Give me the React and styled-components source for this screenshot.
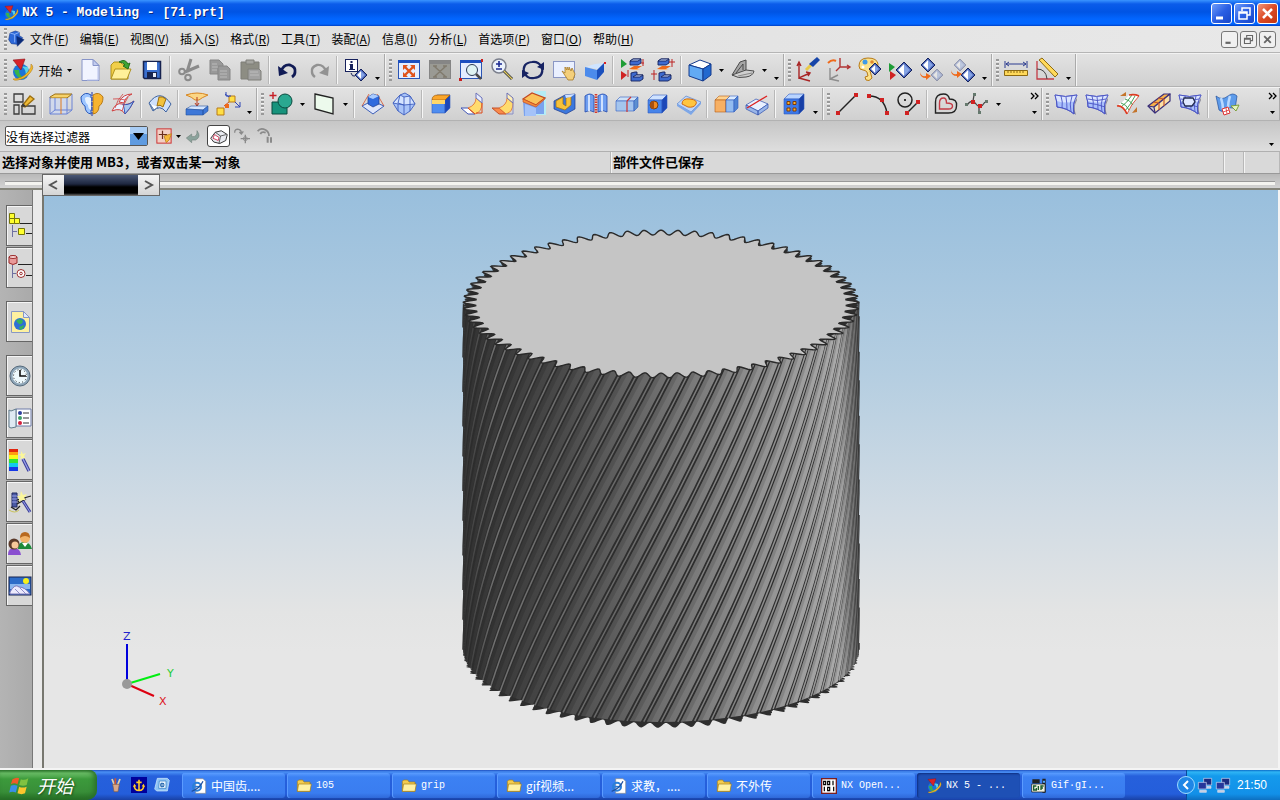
import React from "react";
import styled, { createGlobalStyle, css } from "styled-components";

const GlobalStyle = createGlobalStyle`
  * {
    box-sizing: border-box;
  }

  body {
    margin: 0;
    font-family: "Noto Sans CJK SC", "Liberation Sans", sans-serif;
    font-size: 12px;
    color: #000;
    background: #d6d6d6;
  }

  button {
    font: inherit;
    color: inherit;
    padding: 0;
    border: 0;
    background: none;
  }
`;

/* ---------- icons ---------- */

const Svg = styled.svg`
  display: block;
  flex: none;
  overflow: visible;
`;

const Box = ({ x = 3, y = 4, w = 13, h = 12, d = 5, top = "#fff", front = "#5a94f0", side = "#1d4bbd", line = "#2f5bc0" }) => (
  <g stroke={line} strokeWidth=".6" strokeLinejoin="round">
    <path d={`M${x} ${y + d}l${d} ${-d}h${w}l${-d} ${d}z`} fill={top} />
    <path d={`M${x} ${y + d}h${w}v${h}h${-w}z`} fill={front} />
    <path d={`M${x + w} ${y + d}l${d} ${-d}v${h}l${-d} ${d}z`} fill={side} />
  </g>
);

const Diamond = ({ x = 12, y = 12, s = 7, o = 1 }) => (
  <g opacity={o}>
    <path d={`M${x} ${y - s}l${s} ${s}l${-s} ${s}l${-s} ${-s}z`} fill="#4a65b8" stroke="#14225e" />
    <path d={`M${x} ${y - s + 2}v${2 * s - 4}l${-s + 2} ${-s + 2}z`} fill="#fff" />
    <path d={`M${x} ${y - s + 2}v${2 * s - 4}l${s - 2} ${-s + 2}z`} fill="#86a4e4" />
  </g>
);

const Sheet = ({ grid }) => (
  <g stroke="#4b55c4" strokeWidth=".9">
    <path d="M22 5l1 3q-4 7-1 15l-3-2z" fill="#8a8a99" stroke="none" />
    <path d="M1 3q10 3 22 0q-5 9-3 19q-7-6-17-7q0-6-2-12z" fill="#a9bffc" />
    <path d="M1 3q10 3 22 0l-2 6q-9 3-18 0z" fill="#dbe5ff" stroke="none" />
    <path d="M1 3q10 3 22 0q-5 9-3 19q-7-6-17-7q0-6-2-12zM7 4q2 6 1 12M12 5q1 6 1 13M18 4q-3 8-1 16" fill="none" />
    {grid && <path d="M3 7q9 3 18 0M3 11q9 1 17 4" fill="none" />}
  </g>
);

const NxMark = () => (
  <g>
    <circle cx="11" cy="14" r="8" fill="#1b74d8" />
    <path d="M4 12q2 9 11 9q-6-3-6-9z" fill="#38b34a" />
    <path d="M9 8q7 1 7 9q3-4 2-8z" fill="#59d3e8" />
    <path d="M21 6q4 3-1 9t-12 7q-4 1-5-1q9 0 15-7q4-5 3-8z" fill="#f2b92c" stroke="#a8720d" strokeWidth=".5" />
    <path d="M3 2l12-1l-4 11z" fill="#d8232a" stroke="#8c1015" strokeWidth=".6" />
  </g>
);

const WinBox = ({ children, fill = "#e4edff" }) => (
  <g>
    <rect x="1.5" y="2.5" width="21" height="18" fill={fill} stroke="#2a55b5" />
    <path d="M1 2h22v3H1z" fill="#1c4fc0" />
    {children}
  </g>
);

const icons = {
  nx: <NxMark />,
  part: (
    <g stroke="#0c2d80" strokeWidth=".8">
      <path d="M3 3l8-3l6 2v5l5 3l-8 10l-9-1l-4-6z" fill="#2d68d8" />
      <path d="M3 3l7 2l7-3M10 5v12" fill="none" stroke="#9fc2ff" strokeWidth="1.200" />
      <path d="M13 8l11 5l-10 10z" fill="#0a2a78" />
    </g>
  ),
  newFile: (
    <g stroke="#8794c8">
      <path d="M4 1.500h11l6 6v15H4z" fill="#f1f4ff" />
      <path d="M15 1.500v6h6z" fill="#c3cdf0" />
      <path d="M20 9v13H9" fill="none" stroke="#b9c3ea" />
    </g>
  ),
  open: (
    <g stroke="#a98a12" strokeWidth=".9" strokeLinejoin="round">
      <path d="M2 21V7l3-3h6l2 2h6v15z" fill="#f1cf4a" />
      <path d="M2 21l4-10h16l-4 10z" fill="#fff09a" />
      <path d="M10 4q6-4 9 2l2-1l-2 6l-5-3l2-1q-2-3-6-3z" fill="#3fa433" stroke="#1e6a18" />
    </g>
  ),
  save: (
    <g>
      <path d="M3.500 3.500h17v17h-16l-1-1z" fill="#3a6fcf" stroke="#16224f" strokeWidth="1.500" />
      <path d="M7 4h10v8H7z" fill="#fff" />
      <path d="M7 14h10v6H7z" fill="#18244e" />
      <path d="M13 15h3v4h-3z" fill="#e8edf8" />
    </g>
  ),
  cut: (
    <g fill="none" stroke="#8b8b8b" strokeWidth="2">
      <path d="M14 1l-4 13M22 8L8 14" strokeWidth="3" />
      <circle cx="5" cy="13.500" r="2.800" />
      <circle cx="11" cy="19.500" r="2.800" />
    </g>
  ),
  copy: (
    <g fill="#999" stroke="#858585">
      <path d="M2 2h9l4 4v10H2z" />
      <path d="M10 8h9l3 3v11H10z" />
      <path d="M4 6h5M4 9h6M4 12h5M12 13h7M12 16h7M12 19h7" stroke="#bbb" />
    </g>
  ),
  paste: (
    <g fill="#8d8d83" stroke="#7f7f78">
      <path d="M2 4h18v17H2z" />
      <path d="M7 2h8v4H7z" fill="#a5a5a0" />
      <path d="M9 11h11l2 2v9H9z" fill="#a2a2a2" />
      <path d="M11 14h8M11 17h9" stroke="#bdbdbd" />
    </g>
  ),
  undo: (
    <g>
      <path d="M5 13q3-7 9-6q6 2 5 7q0 3-3 5" fill="none" stroke="#111b55" strokeWidth="2.800" />
      <path d="M2 8l1 10l9-3z" fill="#111b55" />
    </g>
  ),
  redo: (
    <g>
      <path d="M19 13q-3-7-9-6q-6 2-5 7q0 3 3 5" fill="none" stroke="#929292" strokeWidth="2.400" />
      <path d="M22 8l-1 10l-9-3z" fill="#929292" />
    </g>
  ),
  info: (
    <g>
      <rect x="1.500" y="1.500" width="12" height="12" fill="#fff" stroke="#16215c" />
      <path d="M6 6h3v5h2v1H5v-1h1V7H5zM6.500 3h2v2h-2z" fill="#16215c" />
      <path d="M7 15q1 4 4 3" fill="none" stroke="#16215c" />
      <Diamond x={17} y={17} s={6} />
    </g>
  ),
  fit: (
    <WinBox>
      <path d="M8 9l8 8M16 9l-8 8" stroke="#e0531b" strokeWidth="2.400" />
      <path d="M6 7h5l-5 5zM18 7h-5l5 5zM6 19h5l-5-5zM18 19h-5l5-5z" fill="#e0531b" />
    </WinBox>
  ),
  fitSel: (
    <g>
      <rect x="1.500" y="2.500" width="21" height="18" fill="#9a9a94" stroke="#858585" />
      <path d="M2 3h20v3H2z" fill="#868686" />
      <path d="M6 8l12 11M18 8L6 19M5 8h4M15 8h4M5 19h4M15 19h4" stroke="#817b6e" strokeWidth="1.500" />
    </g>
  ),
  zoom: (
    <WinBox>
      <circle cx="13" cy="12" r="5.500" fill="#dff3f3" stroke="#2c3a55" />
      <path d="M17 16l5 5" stroke="#4a4a4a" strokeWidth="2.500" />
      <path d="M0 20h3v3H0zM22 1h2v3h-2z" fill="#c92020" />
    </WinBox>
  ),
  zoomInOut: (
    <g>
      <circle cx="9" cy="8" r="7" fill="#eaf1fb" stroke="#7b7f8c" strokeWidth="1.500" />
      <path d="M9 3v6M6 6h6M6 11h6" stroke="#1c2a93" strokeWidth="1.600" />
      <path d="M14 13l8 8" stroke="#3d3d3d" strokeWidth="3" />
      <path d="M14 13l8 8" stroke="#e7cf5d" strokeWidth="1.200" />
    </g>
  ),
  rotate: (
    <g fill="none" stroke="#182463" strokeWidth="2.200">
      <path d="M3 15Q1 5 11 4q6-1 9 4M21 9q2 10-8 11q-6 1-9-4" />
      <path d="M23 4v8l-7-3zM1 20v-8l7 3z" fill="#182463" stroke="none" />
    </g>
  ),
  pan: (
    <g>
      <rect x="1.500" y="3.500" width="21" height="16" fill="#eaf0ff" stroke="#8b97c4" />
      <path d="M10 13l3 2V9l2 3V9l2 3V9l2 4l1-3l3 6l-2 6h-5z" fill="#f4cf7a" stroke="#a77a25" strokeWidth=".8" />
    </g>
  ),
  perspective: (
    <g>
      <path d="M2 9l10-3l9-1l-6 6z" fill="#cfe4ff" />
      <path d="M2 9l12 3v10L2 18z" fill="#4c8bec" />
      <path d="M14 12l7-7v9l-7 8z" fill="#1b50bd" />
      <path d="M21 4h2v2h-2z" fill="#d22" />
    </g>
  ),
  clipA: (
    <g>
      <path d="M1 1l6 5l-6 4z" fill="#1f9d37" />
      <path d="M1 13l6 4l-6 5z" fill="#d02323" />
      <g stroke="#14225e" strokeWidth=".9" fill="#3e6bcf">
        <path d="M10 3l3-2h8v4l-3 2h-8zM11 15l4-1h2v3h6v4l-3 2h-9z" />
        <path d="M10 3h8l3-2h-8zM13 19h7l3-2h-7z" fill="#c3d8ff" />
      </g>
      <path d="M9 11l5-3h8l-5 3z" fill="#ef6a1b" />
      <path d="M9 11h8l4 1h-8z" fill="#ffb06a" />
      <path d="M23 1v7M8 12v7M21 5h3" stroke="#b22" />
    </g>
  ),
  clipB: (
    <g>
      <g stroke="#14225e" strokeWidth=".9" fill="#3e6bcf">
        <path d="M7 3l3-2h8v4l-3 2H7zM8 15l4-1h2v3h6v4l-3 2H8z" />
        <path d="M7 3h8l3-2h-8zM10 19h7l3-2h-7z" fill="#c3d8ff" />
      </g>
      <path d="M6 11l5-3h9l-5 3z" fill="#ef6a1b" />
      <path d="M6 11h8l4 1h-8z" fill="#ffb06a" />
      <path d="M21 1v8M18 4h6M3 12v10M0 16h6" stroke="#b22" fill="none" />
    </g>
  ),
  shaded: (
    <g stroke="#143a8d" strokeLinejoin="round">
      <path d="M1 7l11-5l11 4l-8 5z" fill="#fff" />
      <path d="M1 7l14 4v12L1 18z" fill="#62aaf4" />
      <path d="M15 11l8-5v11l-8 6z" fill="#2269cf" />
    </g>
  ),
  section: (
    <g stroke="#4b4b4b" strokeLinejoin="round">
      <path d="M1 17L9 4l6-2v10l-8 6z" fill="#a6a6a6" />
      <path d="M1 17l14-5l8 1q-1 5-8 6q-8 2-14-2z" fill="#cfcfcf" />
      <path d="M5 15l7-9v6" fill="none" />
      <path d="M7 18l14-3" fill="none" stroke="#888" />
    </g>
  ),
  wcs: (
    <g fill="none" stroke="#a82424" strokeWidth="1.400">
      <path d="M3 6v14l11-5M3 20l11 3M1 8l2-4l2 4M10 14l4 1l-2 3" />
      <path d="M10 12L18 4" stroke="#e8c948" strokeWidth="3" />
      <path d="M13 6l8-7l3 3l-7 7z" fill="#1745a8" stroke="none" />
    </g>
  ),
  wcsMove: (
    <g fill="none" strokeWidth="1.400">
      <path d="M3 10v11l8-4M3 21l9 2" stroke="#8d8d8d" />
      <path d="M13 0v9h9M13 9l-4 4M20 7l3 2l-3 2" stroke="#b13434" />
      <path d="M1 5q4-4 8-2" stroke="#ef6a1b" strokeWidth="2" />
    </g>
  ),
  palette: (
    <g>
      <path d="M1 8q0-8 9-8t10 6q0 4-5 4q-3 0-3 3l2 7q-3 4-6 2l-1-3l3-1l-1-4q-2-2-4-2q-4 0-4-4z" fill="#fbe28b" stroke="#b87a16" />
      <circle cx="7" cy="4" r="2.500" fill="#3f9be8" />
      <circle cx="14" cy="4" r="1.800" fill="#e1882c" />
      <circle cx="5" cy="9" r="1.500" fill="#fff" />
      <Diamond x={17} y={11} s={6} />
    </g>
  ),
  showHide: (
    <g>
      <path d="M0 5l6 4l-6 5z" fill="#1f9d37" />
      <path d="M1 13l6 4l-6 5z" fill="#d02323" />
      <Diamond x={15} y={12} s={8} />
    </g>
  ),
  hide: (
    <g>
      <Diamond x={8} y={7} s={7} />
      <Diamond x={17} y={17} s={6} o={0.35} />
      <path d="M0 14q1 5 6 4v-3l5 3l-5 4v-2q-6 0-6-6z" fill="#ef6a1b" />
    </g>
  ),
  show: (
    <g>
      <Diamond x={9} y={7} s={6} o={0.35} />
      <Diamond x={17} y={17} s={7} />
      <path d="M0 12q1 5 6 4v-3l5 3l-5 4v-2q-6 0-6-6z" fill="#ef6a1b" />
    </g>
  ),
  distance: (
    <g>
      <path d="M1 3v7M23 3v7M2 6h20M5 4L2 6l3 2M19 4l3 2l-3 2" stroke="#2b3b8f" fill="none" />
      <path d="M.500 12.500h23v5H.500z" fill="#ffd95a" stroke="#8d6a12" />
      <path d="M4 13v2M7 13v2M10 13v2M13 13v2M16 13v2M19 13v2" stroke="#8d6a12" />
    </g>
  ),
  angle: (
    <g fill="none">
      <path d="M2 3v18h17" stroke="#c43b46" strokeWidth="1.300" />
      <path d="M2 11q9 0 10 10" stroke="#444" />
      <path d="M4 2l3-2l16 16l-3 3z" fill="#ffd95a" stroke="#8d6a12" />
    </g>
  ),
  sketch: (
    <g fill="none" stroke="#3b3b3b" strokeWidth="1.300">
      <path d="M2 2h9v8H2zM2 13h5v9H2zM10 14h13v8H10z" />
      <path d="M10 14l8-10l4 3l-9 8z" fill="#f0bb35" stroke="#9c6f10" />
      <path d="M10 14l1-2l2 2z" fill="#222" />
    </g>
  ),
  extrude: (
    <g fill="none">
      <path d="M1 5l5-3h17l-5 4H1z" fill="#f7d26a" stroke="#9c6f10" />
      <path d="M2 6h16v16H2z" fill="#cdd8f4" opacity=".7" />
      <path d="M1 5v17h17V6M6 6v12M23 2v16M1 22l5-4M18 22l5-4M6 18h17" stroke="#6a83d6" />
      <path d="M12 6v16" stroke="#e07a1b" />
    </g>
  ),
  revolve: (
    <g>
      <path d="M11 3Q5-1 1 5q0 7 4 9q0 7 6 8z" fill="#9cc5ff" stroke="#2756b8" />
      <path d="M13 3q6-4 10 2q0 7-4 9q0 7-6 8z" fill="#f6b431" stroke="#b87a16" />
      <path d="M11 6Q7 4 5 6q0 5 3 7q0 4 3 5z" fill="#e6f2ff" />
      <path d="M12 0v24" stroke="#1a35a8" strokeDasharray="4 1" />
    </g>
  ),
  swept: (
    <g fill="none">
      <path d="M8 10Q12 2 21 2q-7 3-8 9zM1 19q4-9 10-7q5 2 12-3q-4 8-9 13q-4-7-13-3z" fill="#eaf2ff" stroke="#d04040" />
      <path d="M12 12q5 2 11-3q-4 8-9 13q-1-7-2-10z" fill="#a9c8ee" stroke="#2f55b9" />
      <path d="M12 2q-6 6-8 14M17 5q-4 6-6 14M2 7q6-1 12 1" stroke="#d04040" strokeWidth=".8" />
    </g>
  ),
  offset: (
    <g>
      <path d="M1 11Q12-4 23 12l-5 8q-6-8-13-1z" fill="#cfe0fa" stroke="#3d629f" />
      <path d="M9 14q3-2 6 1l3-8q-4-3-7-2z" fill="#f2c23d" stroke="#9c6f10" />
      <path d="M2 12l4 6l4-3" fill="#fff" stroke="#56749f" />
    </g>
  ),
  emboss: (
    <g>
      <path d="M1 3q11-4 22 0q-7 3-9 5h-4Q7 5 1 3z" fill="#fbd685" stroke="#d88620" />
      <path d="M12 5v9M10 11l2 3l2-3" stroke="#b53a22" fill="none" />
      <path d="M1 17l5-3h17l-5 4z" fill="#d4e6ff" stroke="#23509e" strokeWidth=".6" />
      <path d="M1 17l17 1v5H1zM18 18l5-4v5l-5 4z" fill="#3e78d8" stroke="#23509e" strokeWidth=".6" />
    </g>
  ),
  pattern: (
    <g fill="#ffe23f" stroke="#b87a16">
      <path d="M1 16h7v7H1zM13 4h6v6h-6z" fill="#ffdf45" />
      <path d="M8 14l5-4" stroke="#d0501b" fill="none" />
      <path d="M9 2l4 3M19 10l5 5M10 0v4h5M24 10v5h-5" stroke="#2c45b5" fill="none" />
      <path d="M9 12h4v4H9z" fill="#ef6a1b" stroke="none" />
    </g>
  ),
  unite: (
    <g>
      <path d="M4 0v7M0.500 3.500h7" stroke="#c71f26" strokeWidth="1.400" />
      <path d="M3 10h15v12H3z" fill="#17937c" stroke="#0b4a3e" />
      <circle cx="16" cy="9" r="7" fill="#2aa890" stroke="#0b4a3e" />
    </g>
  ),
  datum: <path d="M3 2l18 4v16L3 17z" fill="#ecfaec" stroke="#222" strokeWidth="1.300" />,
  boss: (
    <g>
      <path d="M1 14l10-5l12 5l-11 8z" fill="#dfe6fa" stroke="#3d5fb8" />
      <path d="M1 14L8 2M23 14L16 2" stroke="#d5502a" strokeWidth=".8" />
      <path d="M7 5l5-3l6 2v8l-6 3l-5-3z" fill="#2f6ade" stroke="#1c3a8c" strokeWidth=".7" />
      <path d="M7 5l5 2l6-3l-6-2z" fill="#a9cbff" />
    </g>
  ),
  gem: (
    <g stroke="#3e5fbe" strokeWidth=".9" strokeLinejoin="round">
      <path d="M8 3l5-2l5 3l5 8l-5 7l-6 4l-6-4l-5-8z" fill="#a9c4f8" />
      <path d="M8 3l4 2l6-1l5 8l-11 1L1 11z" fill="#d5e4ff" />
      <path d="M12 5v18M8 3L6 11l6 2M18 4l0 8M6 12v7M18 12v7" fill="none" />
    </g>
  ),
  block: (
    <g>
      <Box x={3} y={3} w={13} h={13} d={5} top="#ffd14a" front="#4f8df0" side="#1c48b8" />
      <path d="M3 8q0-5 6-5h12l-5 5z" fill="#fba62a" stroke="#a05c0c" strokeWidth=".7" />
      <path d="M3 8h13v4H3z" fill="#ffd76a" />
    </g>
  ),
  flangeA: (
    <g strokeLinejoin="round">
      <path d="M1 16h7l7 6H8z" fill="#fff" stroke="#4055b5" />
      <path d="M8 16q8-3 8-10l6 5q0 9-7 11z" fill="#ffdc6e" stroke="#e06a2b" strokeWidth=".8" />
      <path d="M16 6V1l6 5v5z" fill="#e8eeff" stroke="#6a70b8" />
      <path d="M8 16l7 6M22 11v10h-6" stroke="#dc4b1b" fill="none" />
    </g>
  ),
  flangeB: (
    <g strokeLinejoin="round">
      <path d="M1 16h7l7 6H8z" fill="#f98a4a" stroke="#c4502a" />
      <path d="M8 16q8-3 8-10l6 5q0 9-7 11z" fill="#ffdc6e" stroke="#e06a2b" strokeWidth=".8" />
      <path d="M16 6V1l6 5v5z" fill="#fff0b8" stroke="#6a70b8" />
      <path d="M22 11v11h-7" stroke="#8a8fc8" fill="none" />
    </g>
  ),
  chamfer: (
    <g>
      <path d="M12-1h12v24H12z" fill="#b5ecf5" />
      <path d="M1 9l13 5l8-7v15h-8v2H2z" fill="#7aa2ee" />
      <path d="M3 12l11 4v8H3z" fill="#a4c2f8" />
      <path d="M1 7l9-6l13 5l-9 7z" fill="#fbc35a" stroke="#c34720" strokeWidth="1.200" />
      <path d="M1 7v3l13 5l9-8V6l-9 7z" fill="#f58d3a" stroke="#c34720" strokeWidth=".6" />
    </g>
  ),
  shell: (
    <g>
      <path d="M1 9l11-6l10-1v15l-9 5L1 17z" fill="#3c78dd" stroke="#1c3a8c" strokeWidth=".7" />
      <path d="M3 9l7-4v7l3 2V6l5-2v9l-6 5l-9-3z" fill="#f6c139" stroke="#9c6f10" strokeWidth=".7" />
      <path d="M12 3l10-1l-4 3l-5 1z" fill="#cfe0ff" />
    </g>
  ),
  thread: (
    <g>
      <path d="M1 4q5-4 9 0v16q-4-3-9 0zM14 4q5-4 9 0v16q-4-3-9 0z" fill="#6f9ef0" stroke="#2047ad" strokeWidth=".8" />
      <path d="M5 3v16M18 3v16" stroke="#cfe1ff" strokeWidth="2" />
      <path d="M12 2v20" stroke="#d5382d" strokeWidth="2.600" strokeDasharray="1.500 1" />
    </g>
  ),
  split: (
    <g>
      <Box x={1} y={5} w={18} h={10} d={4} top="#cfe2f7" front="#a4c5ee" side="#5d8fd0" />
      <path d="M12 9v11M12 9l4-4" stroke="#c33" strokeWidth="1.200" />
    </g>
  ),
  hole: (
    <g>
      <Box x={2} y={3} w={14} h={13} d={5} top="#cfe2ff" front="#4684ea" side="#1c48b8" />
      <circle cx="8" cy="13" r="4" fill="#f08a20" stroke="#5a2c08" strokeWidth=".8" />
      <path d="M8 9a4 4 0 0 0 0 8z" fill="#a8500e" />
    </g>
  ),
  pad: (
    <g>
      <path d="M0 12l9-8l15 6l-10 10z" fill="#bcd5fb" stroke="#5b84c9" strokeWidth=".7" />
      <path d="M14 20l10-10v2L14 23L0 14v-2z" fill="#7da7e8" />
      <path d="M5 12q0-6 8-5q8 1 6 5q-2 4-8 3z" fill="#ffc53f" stroke="#d16b13" />
    </g>
  ),
  trim: (
    <g>
      <Box x={1} y={4} w={11} h={12} d={4} top="#ffd28f" front="#f7b064" side="#e58a34" line="#b35c14" />
      <Box x={12} y={4} w={8} h={12} d={4} top="#dcecff" front="#93bcf0" side="#4f83d2" />
    </g>
  ),
  splitSheet: (
    <g>
      <path d="M1 13l10-6l12 5l-10 7z" fill="#e8f0ff" stroke="#2e4fae" strokeWidth=".7" />
      <path d="M1 13v4l12 6v-4zM13 23l10-7v-4l-10 7z" fill="#9ab6e8" stroke="#2e4fae" strokeWidth=".7" />
      <path d="M2 16L22 4" stroke="#d22" strokeWidth="1.400" />
    </g>
  ),
  holes: (
    <g>
      <Box x={2} y={2} w={15} h={15} d={5} top="#b9d4ff" front="#3c78e8" side="#173fa6" />
      <g fill="#ffb12e" stroke="#7c3d08">
        <path d="M5 9.500h3v3H5zM11 9.500h3v3h-3zM5 16h3v3H5zM11 16h3v3h-3z" />
      </g>
    </g>
  ),
  line: (
    <g>
      <path d="M3 21L21 3" stroke="#222" strokeWidth="1.400" />
      <path d="M1 19h4v4H1zM19 1h4v4h-4z" fill="#d02222" />
    </g>
  ),
  arc: (
    <g>
      <path d="M3 4q15 0 18 17" stroke="#222" strokeWidth="1.400" fill="none" />
      <path d="M1 2h4v4H1zM14 6h4v4h-4zM19 19h4v4h-4z" fill="#d02222" />
    </g>
  ),
  circle: (
    <g>
      <circle cx="8" cy="8" r="7" fill="none" stroke="#222" strokeWidth="1.500" />
      <circle cx="8" cy="8" r="1" />
      <path d="M10 21l11-11" stroke="#222" strokeWidth="1.400" />
      <path d="M8 19h4v4H8zM19 8h4v4h-4z" fill="#d02222" />
    </g>
  ),
  curveOffset: (
    <g fill="none" strokeWidth="1.400">
      <path d="M1.500 21V10q0-8 8-8q5 0 6 5q8 0 7 7q0 7-8 7z" stroke="#222" />
      <path d="M5.500 17V11q0-5 4-5q3 0 3 5q6 0 6 3q0 3-4 3z" stroke="#c43b46" />
    </g>
  ),
  spline: (
    <g>
      <path d="M2 13q5-7 9-1t9-2M8 9l1-6M14 14v7" stroke="#444" fill="none" strokeWidth="1.300" />
      <path d="M6 8h4v4H6zM13 12h4v4h-4z" fill="#d02222" />
      <path d="M0 11h3v3H0zM8 1h3v3H8zM20 8h3v3h-3zM13 19h3v3h-3z" fill="#65796d" />
    </g>
  ),
  sheet: <Sheet />,
  sheetGrid: <Sheet grid />,
  mesh: (
    <g>
      <path d="M1 14q6-1 10 8q4-10 12-18q-4-2-10-1q-5 6-12 11z" fill="#fff" />
      <path d="M5 11q5 1 8 7M9 7q5 1 8 6M5 15q6-4 11-12M9 19q6-7 10-15" stroke="#48a05a" fill="none" />
      <path d="M1 14q6-1 10 8M13 3q6-1 10 1" stroke="#dd3b21" fill="none" strokeWidth="1.700" />
      <path d="M11 22q4-10 12-18" stroke="#dd3b21" fill="none" strokeWidth=".8" />
      <path d="M4 4h6V0M16 21l5-6v5z" fill="#c4742a" />
    </g>
  ),
  ruled: (
    <g stroke="#3a2f7a" strokeWidth="1.200" strokeLinejoin="round">
      <path d="M1 14l16-12h6L7 15z" fill="#f6b04b" />
      <path d="M7 15L23 2v7L8 21z" fill="#fbe0a8" />
      <path d="M1 14l7 7" fill="none" />
      <path d="M12 11v7M17 7v7M6 10l6 1M11 6l6 1" fill="none" stroke="#c8562a" />
    </g>
  ),
  nSided: (
    <g>
      <Sheet grid />
      <path d="M6 6h9l2 4l-3 4H7l-2-4z" fill="#dfe8ff" stroke="#222b52" strokeWidth="1.300" />
    </g>
  ),
  enlarge: (
    <g>
      <path d="M1 4q6 5 12 0q5-4 9 0l-2 13q-6-3-9 1q-4 3-7 0z" fill="#5d9bea" stroke="#23509e" strokeWidth=".7" />
      <path d="M6 6q2 6 2 12M15 4q-2 6-2 12" stroke="#b9d9ff" fill="none" strokeWidth="2.500" />
      <path d="M7 17l6-2l2 6l-6 2z" fill="#fff" stroke="#d33" />
      <path d="M8 20l6-2M11 16l1 6" stroke="#d33" strokeWidth=".8" />
      <path d="M16 14l8-1l-3 6z" fill="#e6f4c0" stroke="#7d9f3a" />
    </g>
  ),
  snapPoint: (
    <g>
      <rect x="2.500" y="2.500" width="19" height="19" fill="#f2cfc4" stroke="#cc2f2f" strokeWidth="1.300" />
      <path d="M10 5v11M5 10h11" stroke="#6b2f1c" strokeWidth="1.600" />
      <path d="M12 12l10-3l-3 8l-4 4z" fill="#f5b83a" stroke="#b87a16" />
    </g>
  ),
  reset: (
    <path d="M2 15l8-6v4q9 1 8-9q7 9-2 14h-6v4z" fill="#8ba39c" stroke="#74857f" />
  ),
  faceSel: (
    <g>
      <path d="M1 15l6-8l8-2l8 5l-2 8l-8 4l-8-2z" fill="#e8eaf0" stroke="#333" strokeWidth="1.300" />
      <path d="M7 7l7 5l8-2M14 12l-2 10" fill="none" stroke="#333" />
      <path d="M6 10l6 4l-1 4l-7-3z" fill="#fff" stroke="#cf4560" strokeWidth="1.300" />
    </g>
  ),
  snapCenter: (
    <g fill="none" stroke="#8a8a8a" strokeWidth="2">
      <path d="M1 7q0-6 6-5q4 1 4 5M8 6l3 3l3-4" />
      <path d="M17 10v13M10 16h14" />
      <circle cx="17" cy="16" r="3" strokeWidth="1.300" />
    </g>
  ),
  snapEnd: (
    <g fill="none" stroke="#8a8a8a" strokeWidth="2.600">
      <path d="M1 5q4-6 12-2q5 3 5 9M5 9q2-4 8-2" />
      <path d="M16 13v9M21 14v8" strokeWidth="3" />
    </g>
  ),
  navAssembly: (
    <g>
      <path d="M1.500-.500h5v5h-5zM1.500 4.500h5v5h-5zM6.500 4.500h5v5h-5zM10.500 14.500h6v6h-6z" fill="#ffff2e" stroke="#77760a" />
      <path d="M12 9.500h12M18 19.500h6" stroke="#222" />
      <path d="M4.500 11v12M4 17.500h5" stroke="#6e70a0" />
    </g>
  ),
  navPart: (
    <g>
      <path d="M1 1v6q4 3 8 0V1q-4-3-8 0z" fill="#e89a9a" stroke="#9c2d2d" />
      <ellipse cx="5" cy="1" rx="4" ry="1.500" fill="#f8d4d4" stroke="#9c2d2d" />
      <path d="M10 8.500h14M18 19.500h6" stroke="#222" />
      <path d="M4.500 9v13M4 17.500h4" stroke="#6e70a0" />
      <circle cx="13" cy="17.500" r="4" fill="#fff" stroke="#9c2d2d" />
      <circle cx="13" cy="17.500" r="1.300" fill="none" stroke="#9c2d2d" />
    </g>
  ),
  web: (
    <g>
      <path d="M3.500 1.500h12l6 6v15h-18z" fill="#fdf0a0" stroke="#8898c4" />
      <path d="M15.500 1.500v6h6z" fill="#dfe8ff" stroke="#8898c4" />
      <circle cx="12" cy="14" r="6" fill="#2f6fd6" />
      <path d="M8 11q4-4 7 0q-1 4-4 3zM11 17l5-2q0 4-4 5z" fill="#36b25c" />
    </g>
  ),
  clock: (
    <g>
      <circle cx="12" cy="12" r="10" fill="#8fa6b8" stroke="#556a7c" />
      <circle cx="12" cy="12" r="7.500" fill="#eef9fd" />
      <circle cx="12" cy="12" r="6.500" fill="none" stroke="#222" strokeDasharray="1 2.400" />
      <path d="M12 6v6h6" stroke="#111" strokeWidth="1.600" fill="none" />
    </g>
  ),
  roles: (
    <g>
      <path d="M8 3h15v17H8z" fill="#fff" stroke="#6d7ba8" />
      <path d="M1 4l2 1l5-2v18l-5 1l-2-1z" fill="#dfe9f2" stroke="#607b8b" />
      <path d="M15 7h6M15 12h6M15 17h6" stroke="#333" />
      <circle cx="12" cy="7" r="2" fill="#31419e" />
      <circle cx="12" cy="12" r="2" fill="#3fa068" />
      <circle cx="12" cy="17" r="2" fill="#d4213d" />
    </g>
  ),
  spectrum: (
    <g>
      <path d="M1 1h9v3H1z" fill="#e2250d" />
      <path d="M1 4h9v3H1z" fill="#ff9c12" />
      <path d="M1 7h9v4H1z" fill="#f8f81c" />
      <path d="M1 11h9v4H1z" fill="#32e432" />
      <path d="M1 15h9v4H1z" fill="#12c9ec" />
      <path d="M1 19h9v4H1z" fill="#1638e6" />
      <path d="M13 3l2 3l3-1l-2 3l2 3l-3-1l-3 1l1-3l-3-2h3z" fill="#fbf79a" />
      <path d="M15 11l6 12" stroke="#3b3f9a" strokeWidth="3.400" />
      <path d="M15 11l6 12" stroke="#9aa0e8" strokeWidth="1.200" />
    </g>
  ),
  wizard: (
    <g>
      <path d="M4 3h5v14H4z" fill="#4a5aa5" stroke="#222b62" />
      <path d="M4 6h5M4 9h5M4 12h5" stroke="#9aa0e8" />
      <path d="M9 10l14-4M9 14l9-5M3 17l5 3l4-4M10 12l6-5" stroke="#222" fill="none" strokeWidth="1.300" />
      <path d="M1 20q6 4 10 0" stroke="#c9c25a" fill="none" />
      <path d="M13 1l2 4l4-1l-3 4l2 2h-4l-3 2v-4l-2-2h3z" fill="#fbf79a" />
      <path d="M15 11l7 11" stroke="#3b3f9a" strokeWidth="3" />
      <path d="M15 11l7 11" stroke="#9aa0e8" />
    </g>
  ),
  people: (
    <g>
      <path d="M10 17q0-7 6-7t8 7z" fill="#1d8a3a" />
      <circle cx="17" cy="6" r="5" fill="#f2b46a" />
      <path d="M12 6q0-6 5-6t5 6q-5-4-10 0z" fill="#b86a20" />
      <path d="M14 11l3 4l3-4z" fill="#fff" />
      <path d="M0 23q0-7 6-7t7 7z" fill="#8a4fd0" />
      <circle cx="6" cy="12" r="5.500" fill="#5b3a2a" />
      <circle cx="7" cy="13" r="3.500" fill="#f6c79a" />
    </g>
  ),
  landscape: (
    <g>
      <rect x="1" y="3" width="22" height="18" fill="#2d6cc8" stroke="#16224f" />
      <path d="M2 10h20v5H2z" fill="#8ab6ee" />
      <circle cx="18" cy="7" r="3" fill="#f6f01a" />
      <path d="M2 18q5-9 9-5q6 0 11 7H2z" fill="#eceafc" stroke="#7a76b8" />
      <path d="M7 15l5 5M12 14l6 6" stroke="#8f8bc8" />
    </g>
  ),
  ie: (
    <g>
      <path d="M7 1h11l4 4v18H7z" fill="#fff" stroke="#8d8d8d" />
      <circle cx="9" cy="13" r="6" fill="none" stroke="#2a7fd8" strokeWidth="3" />
      <path d="M5 13h10" stroke="#2a7fd8" strokeWidth="2.500" />
      <path d="M1 20Q13 16 18 5" stroke="#1f4f9f" strokeWidth="1.800" fill="none" />
    </g>
  ),
  folder: (
    <g stroke="#a57c14" strokeLinejoin="round">
      <path d="M2 20V5l2-2h6l2 3h9v14z" fill="#f3cb4f" />
      <path d="M2 20l2-11h19l-2 11z" fill="#fff1a3" />
    </g>
  ),
  binary: (
    <g>
      <rect x="1" y="1" width="22" height="22" fill="#fff" stroke="#7c1f1f" strokeWidth="2" />
      <path d="M4 5h3v5H4zM10 5h3v5h-3zM18 4v7M5 13v7M10 14h3v5h-3zM19 13v7" fill="none" stroke="#000" strokeWidth="1.800" />
    </g>
  ),
  gifTool: (
    <g>
      <path d="M2 2h11v6H2zM17 1h5v21h-5z" fill="#222" />
      <path d="M1 9h20v12H1z" fill="#f0f0e0" stroke="#111" />
      <path d="M8 12H4v6h4v-3M11 12v6M19 12h-4v6M15 15h3" fill="none" stroke="#1a5a2a" strokeWidth="2" />
      <path d="M18 4h3v3h-3z" fill="#4fa8ff" />
    </g>
  ),
  brushes: (
    <g strokeWidth="2.600">
      <path d="M6 3l4 10M18 3l-4 10" stroke="#e3d3a8" />
      <path d="M11 2v10" stroke="#d3552b" />
      <path d="M7 11h10l-2 11H9z" fill="#d8a88a" stroke="#7a5a4a" strokeWidth="1" />
    </g>
  ),
  anchor: (
    <g>
      <path d="M0 0h24v24H0z" fill="#00009c" />
      <path d="M12 4v16M8 8h8M5 13q0 7 7 7t7-7" fill="none" stroke="#ffc928" strokeWidth="2.400" />
      <path d="M3 15l2-5l3 4zM21 15l-2-5l-3 4z" fill="#ffc928" />
    </g>
  ),
  desktop: (
    <g>
      <path d="M5 2h15l3 3l-3 16H4l-3-3z" fill="#8fc4f4" stroke="#d9efff" />
      <path d="M8 6h10v11H7z" fill="#eaf6ff" stroke="#2b77c0" />
      <path d="M15 10q-5-2-5 2t5 2M11 12h5" fill="none" stroke="#1a5ea8" strokeWidth="1.600" />
    </g>
  ),
  network: (
    <g stroke="#d5def5">
      <path d="M10 2h12v10H10z" fill="#1b2b80" />
      <path d="M2 8h12v10H2z" fill="#25379b" />
      <path d="M4 20h10v3H4zM15 14h6v3h-6z" fill="#c8cede" />
    </g>
  ),
  flag: (
    <g>
      <path d="M3 5q5-3 8-1L9 11q-4-2-8 0z" fill="#f05a28" />
      <path d="M13 5q4 2 9-1l-2 8q-4 2-9 0z" fill="#7fc241" />
      <path d="M1 13q4-2 8 0l-2 8q-4-2-8 0z" fill="#3a8fe8" />
      <path d="M11 14q4 2 9 0l-2 8q-4 2-9 0z" fill="#fbc62d" />
    </g>
  ),
};

const Icon = ({ name, size = 24 }) => (
  <Svg width={size} height={size} viewBox="0 0 24 24" aria-hidden="true">
    {icons[name]}
  </Svg>
);

/* ---------- layout ---------- */

const Screen = styled.div`
  display: flex;
  flex-direction: column;
  min-height: 100vh;
`;

const TitleBar = styled.header`
  display: flex;
  align-items: center;
  height: 26px;
  padding: 0 2px 0 3px;
  background: linear-gradient(#3a94ff 0, #0b5cea 4px, #0054e4 12px, #0266ff 19px, #0266ff 24px, #0040c4 26px);

  h1 {
    flex: 1;
    margin: 0 0 0 3px;
    font: bold 13px/26px "Liberation Mono", monospace;
    color: #fff;
    text-shadow: 1px 1px #0a2a80;
    white-space: pre;
  }
`;

const WindowButton = styled.button`
  display: grid;
  place-items: center;
  width: 21px;
  height: 21px;
  margin-left: 2px;
  border: 1px solid #fff;
  border-radius: 3px;
  background: ${({ $close }) =>
    $close
      ? "linear-gradient(135deg, #f0957a, #dc4a24 50%, #c33510)"
      : "linear-gradient(135deg, #6f9dfa, #2a5fe4 50%, #1846c8)"};
  color: #fff;
`;

const ChildButton = styled(WindowButton)`
  width: 17px;
  height: 17px;
  border: 1px solid #777;
  background: #f0f0f0;
  color: #666;
`;

const WindowGlyph = ({ type, size = 15 }) => (
  <Svg width={size} height={size} viewBox="0 0 15 15" fill="none" stroke="currentColor" strokeWidth="2">
    {type === "min" && <path d="M2 12h7" strokeWidth="3" />}
    {type === "max" && (
      <g>
        <path d="M5 5V2h8v7h-3" strokeWidth="1.500" />
        <path d="M2 6h8v7H2zM2 7h8" strokeWidth="1.500" />
      </g>
    )}
    {type === "close" && <path d="M3 3l9 9M12 3l-9 9" strokeWidth="2.500" />}
  </Svg>
);

const Grip = styled.span`
  flex: none;
  width: 3px;
  height: 22px;
  margin: 0 1px 0 4px;
  background: repeating-linear-gradient(#999 0 2px, #f2f2f2 2px 3px, transparent 3px 4px);
`;

const MenuBar = styled.nav`
  display: flex;
  align-items: center;
  height: 27px;
  padding-right: 4px;
  background: linear-gradient(90deg, #dedede, #e8e8e8);
  border-bottom: 1px solid #b5b5b5;

  ul {
    flex: 1;
    display: flex;
    gap: 11px;
    margin: 0 0 0 6px;
    padding: 0;
    list-style: none;
  }

  button {
    display: block;
    line-height: 20px;
    white-space: nowrap;
  }
`;

const ToolRow = styled.div`
  display: flex;
  height: 34px;
  background: linear-gradient(#e2e2e2, #d0d0d0);
  border-top: 1px solid #f2f2f2;
  border-bottom: 1px solid #b2b2b2;
`;

const ToolGroup = styled.div`
  display: flex;
  align-items: center;
  flex: ${({ $grow }) => ($grow ? "1 0 auto" : "none")};
  padding-right: 1px;
  border-right: 1px solid #aaa;
  box-shadow: 1px 0 #f4f4f4;
`;

const ToolButton = styled.button`
  display: flex;
  align-items: center;
  justify-content: center;
  flex: none;
  width: 31px;
  height: 31px;

  ${({ $wide }) =>
    $wide &&
    css`
      width: 66px;
      gap: 4px;
    `}
`;

const Separator = styled.span`
  flex: none;
  width: 2px;
  height: 28px;
  margin: 0 2px;
  border-left: 1px solid #b8b8b8;
  border-right: 1px solid #f6f6f6;
`;

const CaretButton = styled.button`
  display: flex;
  flex-direction: column;
  align-items: center;
  justify-content: ${({ $low }) => ($low ? "flex-end" : "center")};
  gap: 12px;
  flex: none;
  width: ${({ $tight }) => ($tight ? "6px" : "12px")};
  height: 31px;
  padding-bottom: ${({ $low }) => ($low ? "6px" : "0")};
`;

const Push = styled.span`
  flex: 1;
`;

const Caret = () => (
  <Svg width="5" height="3" viewBox="0 0 5 3">
    <path d="M0 0h5L2.500 3z" />
  </Svg>
);

const Chevrons = () => (
  <Svg width="9" height="6" viewBox="0 0 9 6" fill="none" stroke="#000" strokeWidth="1.300">
    <path d="M1 0l3 3l-3 3M5 0l3 3l-3 3" />
  </Svg>
);

const SelectionBar = styled.div`
  display: flex;
  align-items: center;
  height: 31px;
  padding: 0 3px 0 5px;
  background: linear-gradient(#c6c6c6, #dedede);
  border-bottom: 1px solid #b0b0b0;
`;

const FilterSelect = styled.div`
  position: relative;
  width: 143px;
  height: 20px;
  margin-right: 4px;

  select {
    width: 100%;
    height: 100%;
    padding: 0;
    border: 1px solid #555;
    border-radius: 2px;
    appearance: none;
    background: #fff;
    color: #000;
    font: inherit;
  }

  svg {
    position: absolute;
    top: 1px;
    right: 1px;
    pointer-events: none;
  }
`;

const SmallButton = styled.button`
  display: grid;
  place-items: center;
  width: 23px;
  height: 22px;
  margin-left: ${({ $active }) => ($active ? "3px" : "0")};
  border: 1px solid ${({ $active }) => ($active ? "#444" : "transparent")};
  border-radius: 3px;
  background: ${({ $active }) => ($active ? "#fff" : "none")};
`;

const StatusRow = styled.div`
  display: grid;
  grid-template-columns: 611px 1fr 20px 36px;
  height: 21px;
  background: #d9d9d9;
  font-size: 13px;
  font-weight: bold;
  line-height: 19px;
  white-space: nowrap;

  span {
    padding-left: 2px;
    border-right: 1px solid #b8b8b8;
    box-shadow: 1px 0 #f4f4f4;
  }
`;

const DialogRail = styled.div`
  position: relative;
  height: 17px;
  padding: 7px 5px;
  background: linear-gradient(#b8b8b8, #d4d4d4);
  border-top: 1px solid #999;
  border-bottom: 2px solid #85857b;

  &::before {
    content: "";
    display: block;
    height: 3px;
    background: #f4f4f0;
    border-top: 1px solid #999;
  }
`;

const RailSlider = styled.div`
  position: absolute;
  z-index: 1;
  top: 0;
  left: 42px;
  display: flex;
  width: 118px;
  height: 22px;
  border: 1px solid #666;
  background: linear-gradient(#4a5876, #1e2740 45%, #000 60%, #000 90%, #555);

  button {
    display: grid;
    place-items: center;
    width: 21px;
    background: linear-gradient(#f5f5f5, #d5d5d5);
  }

  button:last-child {
    margin-left: auto;
  }
`;

const Workspace = styled.main`
  flex: 1;
  display: flex;
  border-bottom: 2px solid #f4f4f4;
`;

const ResourceBar = styled.aside`
  display: flex;
  flex-direction: column;
  gap: 1px;
  width: 33px;
  padding: 15px 0 0 6px;
  background: linear-gradient(90deg, #b4b4b4, #aaa);
  border-right: 1px solid #777;
`;

const ResourceTab = styled.button`
  display: grid;
  place-items: center;
  width: 26px;
  height: 41px;
  margin-top: ${({ $apart }) => ($apart ? "12px" : "0")};
  border: 1px solid #666;
  border-right: 0;
  box-shadow: inset 1px 1px #f5f5f5;
  background: #d8d8d8;
`;

const Splitter = styled.div`
  width: 11px;
  background: #eaeaea;
  border-right: 2px solid #77776f;
`;

const Viewport = styled.section`
  position: relative;
  flex: 1;
  display: flex;
  justify-content: center;
  align-items: flex-start;
  padding-top: 35px;
  border-right: 2px solid #f4f4f4;
  background: linear-gradient(#99bfdd 0, #b5cee1 32%, #d0dbe4 55%, #e3e4e4 73%, #e6e6e6 80%);
`;

const Triad = styled.svg`
  position: absolute;
  left: 72px;
  bottom: 60px;
  font: 11px "DejaVu Sans", sans-serif;
`;

/* ---------- helical gear ---------- */

const TEETH = 73;
const RADIUS = 198;
const DEPTH = 13;
const TILT = 0.373;
const LENGTH = 350;
const TWIST = 0.92;
const CX = 200;
const CY = 79;
const PITCH = (2 * Math.PI) / TEETH;

const toothProfile = () => {
  const points = [];
  const steps = TEETH * 10;
  for (let i = 0; i < steps; i++) {
    const a = (i / steps) * 2 * Math.PI;
    const r = RADIUS - DEPTH * (0.5 + 0.5 * Math.cos(TEETH * (a - Math.PI / 2)));
    points.push(`${(r * Math.cos(a)).toFixed(2)} ${(r * Math.sin(a)).toFixed(2)}`);
  }
  return `M${points.join("L")}Z`;
};

const helixPoint = (start, t) => {
  const a = start + TWIST * t;
  if (a < 0 || a > Math.PI) return null;
  const x = CX + RADIUS * Math.cos(a);
  const y = CY + LENGTH * t + RADIUS * TILT * Math.sin(a);
  return `${x.toFixed(1)} ${y.toFixed(1)}`;
};

// stops short of the end face so the bottom rim of the teeth stays dark
const helixLine = (start) => {
  const points = [];
  for (let i = -1; i <= 59; i++) {
    const p = helixPoint(start, i / 60);
    if (p) points.push(p);
  }
  return points;
};

const helixBand = (from, to) => {
  const left = helixLine(from);
  const right = helixLine(to);
  if (left.length < 2 || right.length < 2) return "";
  return `M${left.join("L")}L${right.reverse().join("L")}Z`;
};

const profile = toothProfile();
const layers = Array.from({ length: 176 }, (_, i) => 1 - i / 175);
const grooves = [];
for (let i = -31; i < 20; i++) {
  const mid = Math.PI / 2 + i * PITCH;
  grooves.push({
    key: i,
    band: helixBand(mid - PITCH * 0.33, mid + PITCH * 0.33),
    shade: helixBand(mid + PITCH * 0.06, mid + PITCH * 0.33),
    crest: helixLine(mid + PITCH / 2),
  });
}

const flatten = (t) =>
  `translate(${CX} ${CY + LENGTH * t}) scale(1 ${TILT}) rotate(${(TWIST * t * 180) / Math.PI})`;

const Gear = () => (
  <Svg width="400" height="506" viewBox="0 0 400 506" role="img" aria-label="71.prt">
    <defs>
      <path id="profile" d={profile} />
      <linearGradient id="steel" gradientUnits="userSpaceOnUse" x1="2" y1="0" x2="398" y2="0">
        <stop offset="0" stopColor="#303030" />
        <stop offset=".06" stopColor="#383838" />
        <stop offset=".25" stopColor="#4a4a4a" />
        <stop offset=".45" stopColor="#686868" />
        <stop offset=".7" stopColor="#8a8a8a" />
        <stop offset=".95" stopColor="#aaa" />
        <stop offset="1" stopColor="#606060" />
      </linearGradient>
      <linearGradient id="crest" gradientUnits="userSpaceOnUse" x1="2" y1="0" x2="398" y2="0">
        <stop offset="0" stopColor="#303030" />
        <stop offset=".08" stopColor="#707070" />
        <stop offset=".4" stopColor="#686868" />
        <stop offset=".95" stopColor="#a0a0a0" />
        <stop offset="1" stopColor="#333" />
      </linearGradient>
    </defs>
    <g fill="#2e2e2e">
      {layers.map((t) => (
        <use key={t} href="#profile" transform={flatten(t)} />
      ))}
    </g>
    {grooves.map((g) => (
      <g key={g.key}>
        <path d={g.band} fill="url(#steel)" />
        <path d={g.shade} fill="#000" opacity=".12" />
        {g.crest.length > 1 && (
          <path d={`M${g.crest.join("L")}`} fill="none" stroke="url(#crest)" strokeWidth="1.500" />
        )}
      </g>
    ))}
    <path
      d={profile}
      transform={flatten(0)}
      fill="#c5c5c5"
      stroke="#2a2a2a"
      strokeWidth="1.400"
      vectorEffect="non-scaling-stroke"
    />
  </Svg>
);

/* ---------- taskbar ---------- */

const TaskBar = styled.footer`
  display: flex;
  height: 30px;
  background: linear-gradient(#1f4fc0 0, #4a90f5 2px, #2660dc 6px, #245edb 24px, #1941a5 30px);
  color: #fff;
`;

const StartButton = styled.button`
  display: flex;
  align-items: center;
  gap: 7px;
  width: 97px;
  margin-right: 9px;
  padding-left: 10px;
  border-radius: 0 8px 10px 0;
  background: linear-gradient(#2f7a2f 0, #6cbf68 3px, #3c9a3c 9px, #388e38 22px, #246b24 30px);
  box-shadow: inset -3px 0 5px #2a702a;
  color: #fff;
  font-size: 18px;
  font-style: italic;
  text-shadow: 1px 1px 2px #1c4a1c;
`;

const QuickLaunch = styled.div`
  display: flex;
  align-items: center;
  gap: 7px;
  width: 76px;
  padding-left: 2px;
`;

const TaskList = styled.div`
  flex: 1;
  display: flex;
  gap: 2px;
  padding: 3px 0 2px;
`;

const TaskButton = styled.button`
  display: flex;
  align-items: center;
  gap: 4px;
  flex: 0 1 103px;
  min-width: 0;
  padding-left: 9px;
  border-radius: 3px;
  background: ${({ $active }) =>
    $active ? "#1e50b5" : "linear-gradient(#5a9cff 0, #3c81f3 4px, #3a7df0 20px, #2f68d8 25px)"};
  box-shadow: ${({ $active }) => ($active ? "inset 1px 1px 2px #0f2f80" : "inset 1px 0 #5b9bff")};
  font: ${({ $latin }) =>
    $latin ? '10px "Liberation Mono", monospace' : '12px "Noto Sans CJK SC", sans-serif'};
  color: #fff;
  white-space: pre;
`;

const Tray = styled.div`
  display: flex;
  align-items: center;
  gap: 2px;
  width: 94px;
  background: linear-gradient(#0c6cc8 0, #2fb5f5 2px, #149aec 6px, #1290e8 24px, #0d6fc0 30px);
  border-left: 1px solid #0b4a9a;

  time {
    margin-left: 4px;
    font: 12px "Liberation Sans", sans-serif;
  }
`;

const TrayToggle = styled.button`
  display: grid;
  place-items: center;
  width: 18px;
  height: 18px;
  margin: 0 0 0 -10px;
  border: 1px solid #9fdcff;
  border-radius: 50%;
  background: #1f86e6;
`;

const menus = [
  ["文件", "F"], ["编辑", "E"], ["视图", "V"], ["插入", "S"], ["格式", "R"], ["工具", "T"],
  ["装配", "A"], ["信息", "I"], ["分析", "L"], ["首选项", "P"], ["窗口", "O"], ["帮助", "H"],
];

const standardRow = [
  ["start", "newFile", "open", "save", "|", "cut", "copy", "paste", "|", "undo", "redo", "|", "info", "more"],
  ["fit", "fitSel", "zoom", "zoomInOut", "rotate", "pan", "perspective", "|", "clipA", "clipB", "|", "shaded", "v", "section", "v", "more"],
  ["wcs", "wcsMove", "palette", "showHide", "hide", "show", "more"],
  ["distance", "angle", "more"],
];

const featureRow = [
  ["sketch", "|", "extrude", "revolve", "swept", "|", "offset", "|", "emboss", "pattern", "more"],
  ["unite", "v", "datum", "v", "|", "boss", "gem", "|", "block", "flangeA", "flangeB", "chamfer", "shell", "thread", "split", "hole", "pad", "|", "trim", "splitSheet", "|", "holes", "more"],
  ["line", "arc", "circle", "|", "curveOffset", "spline", "v", "push", "overflow"],
  ["sheet", "sheetGrid", "mesh", "ruled", "nSided", "|", "enlarge", "push", "overflow"],
];

const resourceTabs = [
  ["navAssembly"], ["navPart"], ["web", true], ["clock", true], ["roles"],
  ["spectrum"], ["wizard"], ["people"], ["landscape"],
];

const tasks = [
  { icon: "ie", text: "中国齿...." },
  { icon: "folder", text: "105", latin: true },
  { icon: "folder", text: "grip", latin: true },
  { icon: "folder", text: "gif视频..." },
  { icon: "ie", text: "求教，...." },
  { icon: "folder", text: "不外传" },
  { icon: "binary", text: "NX Open...", latin: true },
  { icon: "nx", text: "NX 5 - ...", latin: true, active: true },
  { icon: "gifTool", text: "Gif·gI...", latin: true },
];

const ToolItem = ({ item }) => {
  switch (item) {
    case "|":
      return <Separator />;
    case "push":
      return <Push />;
    case "v":
      return (
        <CaretButton aria-label="options">
          <Caret />
        </CaretButton>
      );
    case "more":
      return (
        <CaretButton $low aria-label="more">
          <Caret />
        </CaretButton>
      );
    case "overflow":
      return (
        <CaretButton $low aria-label="overflow">
          <Chevrons />
          <Caret />
        </CaretButton>
      );
    case "start":
      return (
        <ToolButton $wide>
          <Icon name="nx" />
          开始
          <Caret />
        </ToolButton>
      );
    default:
      return (
        <ToolButton aria-label={item}>
          <Icon name={item} />
        </ToolButton>
      );
  }
};

const Toolbar = ({ groups, fill }) => (
  <ToolRow>
    {groups.map((items, g) => (
      <ToolGroup key={g} $grow={fill && g > 1}>
        <Grip />
        {items.map((item, i) => (
          <ToolItem key={i} item={item} />
        ))}
      </ToolGroup>
    ))}
  </ToolRow>
);

const App = () => (
  <Screen>
    <GlobalStyle />
    <TitleBar>
      <Icon name="nx" size={16} />
      <h1>NX 5 - Modeling - [71.prt]</h1>
      <WindowButton aria-label="minimize"><WindowGlyph type="min" /></WindowButton>
      <WindowButton aria-label="restore"><WindowGlyph type="max" /></WindowButton>
      <WindowButton $close aria-label="close"><WindowGlyph type="close" /></WindowButton>
    </TitleBar>

    <MenuBar>
      <Grip />
      <Icon name="part" size={16} />
      <ul>
        {menus.map(([text, key]) => (
          <li key={key}>
            <button>{text}(<u>{key}</u>)</button>
          </li>
        ))}
      </ul>
      <ChildButton aria-label="minimize part"><WindowGlyph type="min" size={11} /></ChildButton>
      <ChildButton aria-label="restore part"><WindowGlyph type="max" size={11} /></ChildButton>
      <ChildButton aria-label="close part"><WindowGlyph type="close" size={11} /></ChildButton>
    </MenuBar>

    <Toolbar groups={standardRow} />
    <Toolbar groups={featureRow} fill />

    <SelectionBar>
      <FilterSelect>
        <select aria-label="filter">
          <option>没有选择过滤器</option>
        </select>
        <Svg width="17" height="18" viewBox="0 0 17 18">
          <path d="M0 0h17v18H0z" fill="#5f9be0" />
          <path d="M0 0h17v7H0z" fill="#a9cdf5" />
          <path d="M3 6h11l-5.500 7z" />
        </Svg>
      </FilterSelect>
      <SmallButton aria-label="snapPoint"><Icon name="snapPoint" size={18} /></SmallButton>
      <CaretButton $tight aria-label="snap options"><Caret /></CaretButton>
      <SmallButton aria-label="reset"><Icon name="reset" size={16} /></SmallButton>
      <SmallButton $active aria-label="faceSel"><Icon name="faceSel" size={18} /></SmallButton>
      <SmallButton aria-label="snapCenter"><Icon name="snapCenter" size={16} /></SmallButton>
      <SmallButton aria-label="snapEnd"><Icon name="snapEnd" size={16} /></SmallButton>
      <Push />
      <CaretButton $low aria-label="more"><Caret /></CaretButton>
    </SelectionBar>

    <StatusRow>
      <span>选择对象并使用 MB3，或者双击某一对象</span>
      <span>部件文件已保存</span>
      <span />
      <span />
    </StatusRow>

    <DialogRail>
      <RailSlider>
        <button aria-label="left">
          <Svg width="9" height="10" viewBox="0 0 9 10" fill="none" stroke="#555" strokeWidth="2"><path d="M8 1L1 5l7 4" /></Svg>
        </button>
        <button aria-label="right">
          <Svg width="9" height="10" viewBox="0 0 9 10" fill="none" stroke="#555" strokeWidth="2"><path d="M1 1l7 4l-7 4" /></Svg>
        </button>
      </RailSlider>
    </DialogRail>

    <Workspace>
      <ResourceBar>
        {resourceTabs.map(([name, apart]) => (
          <ResourceTab key={name} $apart={apart} aria-label={name}>
            <Icon name={name} />
          </ResourceTab>
        ))}
      </ResourceBar>
      <Splitter />
      <Viewport>
        <Gear />
        <Triad width="66" height="80" viewBox="0 0 66 80">
          <path d="M11 56V16" stroke="#00d" strokeWidth="2" />
          <path d="M11 56l33-10" stroke="#0e1" strokeWidth="2" />
          <path d="M11 56l27 12" stroke="#d01" strokeWidth="2" />
          <circle cx="11" cy="56" r="5" fill="#999" />
          <text x="7" y="12" fill="#22c">Z</text>
          <text x="51" y="49" fill="#2c3">Y</text>
          <text x="43" y="77" fill="#d12">X</text>
        </Triad>
      </Viewport>
    </Workspace>

    <TaskBar>
      <StartButton><Icon name="flag" size={20} />开始</StartButton>
      <QuickLaunch>
        <Icon name="brushes" size={16} />
        <Icon name="anchor" size={16} />
        <Icon name="desktop" size={16} />
      </QuickLaunch>
      <TaskList>
        {tasks.map((task) => (
          <TaskButton key={task.text} $active={task.active} $latin={task.latin}>
            <Icon name={task.icon} size={16} />
            {task.text}
          </TaskButton>
        ))}
      </TaskList>
      <Tray>
        <TrayToggle aria-label="show hidden icons">
          <Svg width="6" height="8" viewBox="0 0 6 8" fill="none" stroke="#fff" strokeWidth="2"><path d="M5 0L1 4l4 4" /></Svg>
        </TrayToggle>
        <Icon name="network" size={16} />
        <Icon name="network" size={16} />
        <time>21:50</time>
      </Tray>
    </TaskBar>
  </Screen>
);

export default App;
